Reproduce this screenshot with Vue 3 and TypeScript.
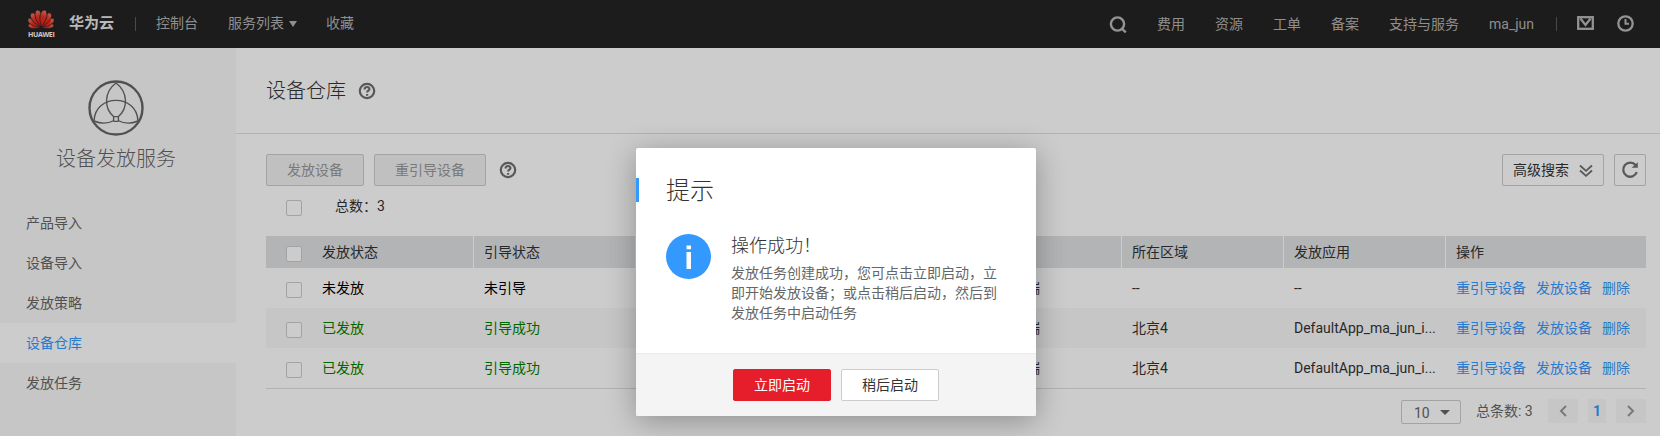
<script setup lang="ts">
interface Row {
  state: string
  boot: string
  region: string
  app: string
  tone: 'plain' | 'ok'
}

interface Petal {
  angle: number
  size: number
}

const leftNav: string[] = ['控制台', '服务列表', '收藏']
const rightNav: string[] = ['费用', '资源', '工单', '备案', '支持与服务', 'ma_jun']
const menu: string[] = ['产品导入', '设备导入', '发放策略', '设备仓库', '发放任务']
const activeMenu = '设备仓库'
const rows: Row[] = [
  { state: '未发放', boot: '未引导', region: '--', app: '--', tone: 'plain' },
  { state: '已发放', boot: '引导成功', region: '北京4', app: 'DefaultApp_ma_jun_i...', tone: 'ok' },
  { state: '已发放', boot: '引导成功', region: '北京4', app: 'DefaultApp_ma_jun_i...', tone: 'ok' },
]
const actions: string[] = ['重引导设备', '发放设备', '删除']
const petals: Petal[] = [
  { angle: -80, size: 0.86 },
  { angle: 80, size: 0.86 },
  { angle: -57, size: 1.04 },
  { angle: 57, size: 1.04 },
  { angle: -34, size: 1.16 },
  { angle: 34, size: 1.16 },
  { angle: -12, size: 1.2 },
  { angle: 12, size: 1.2 },
]
</script>

<template>
  <div class="page">
    <header class="topbar">
      <div class="logo">
        <svg width="26" height="20" viewBox="0 0 26 20">
          <defs>
            <linearGradient id="petal" x1="0" y1="0" x2="0" y2="1">
              <stop offset="0" stop-color="#f4806a" />
              <stop offset="0.4" stop-color="#ea3024" />
              <stop offset="1" stop-color="#dc2018" />
            </linearGradient>
          </defs>
          <path
            v-for="p in petals"
            :key="p.angle"
            d="M0 -0.500C-2.800 -6 -3.800 -11 -1.600 -14Q0 -15.800 1.600 -14C3.800 -11 2.800 -6 0 -0.500Z"
            :transform="`translate(13 18.500) rotate(${p.angle}) scale(${p.size})`"
            fill="url(#petal)"
            stroke="#232323"
            stroke-width="0.6"
          />
        </svg>
        <span class="logo-name">HUAWEI</span>
      </div>
      <span class="brand">华为云</span>
      <i class="bar bar-left"></i>
      <nav class="nav nav-left">
        <a v-for="n in leftNav" :key="n">{{ n }}<i v-if="n === '服务列表'" class="caret"></i></a>
      </nav>
      <nav class="nav nav-right">
        <svg class="search" width="18" height="18" viewBox="0 0 18 18" fill="none" stroke="#b8b8b8" stroke-width="2.400">
          <circle cx="8.500" cy="8" r="6.600" /><path d="M12.800 12.600L16.800 16.300" />
        </svg>
        <a v-for="n in rightNav" :key="n">{{ n }}</a>
      </nav>
      <i class="bar bar-right"></i>
      <svg class="mail" width="17" height="14" viewBox="0 0 17 14" fill="none" stroke="#b8b8b8" stroke-width="2.300">
        <rect x="1.200" y="1.200" width="14.600" height="11.600" /><path d="M3.400 2.500L8.500 9L13.600 2.500" />
      </svg>
      <svg class="clock" width="17" height="17" viewBox="0 0 17 17" fill="none" stroke="#b8b8b8" stroke-width="2.300">
        <circle cx="8.500" cy="8.500" r="7.200" /><path d="M8.500 4V8.700H12" stroke-width="2" />
      </svg>
    </header>

    <div class="body">
      <aside class="side">
        <svg class="side-icon" width="56" height="56" viewBox="0 0 56 56" fill="none" stroke="#666">
          <circle cx="28" cy="28" r="26.500" stroke-width="2.400" />
          <g stroke-width="1.400">
            <path d="M28 3C16 12 15.500 28 26 37M28 3C40 12 40.500 28 30 37" />
            <path d="M6 41C7 13.500 49 13.500 50 41" />
            <path d="M6 41Q16.500 45.500 26 40.500M50 41Q39.500 45.500 30 40.500" />
            <rect x="25.600" y="36.600" width="4.800" height="4.800" rx="1" />
          </g>
        </svg>
        <div class="side-title">设备发放服务</div>
        <ul class="menu">
          <li v-for="m in menu" :key="m" :class="{ active: m === activeMenu }">{{ m }}</li>
        </ul>
      </aside>

      <main class="main">
        <div class="heading">
          <h1>设备仓库</h1>
          <svg class="help" width="18" height="18" viewBox="0 0 18 18" fill="none" stroke="#707070" stroke-width="2.200">
            <circle cx="9" cy="9" r="7.200" /><path d="M6.600 7.400C6.600 4.200 11.500 4.300 11.400 7.200C11.300 8.700 9.100 8.800 9.100 10.600M9.100 11.900V13.800" />
          </svg>
        </div>

        <div class="content">
          <div class="tools">
            <button class="btn disabled">发放设备</button>
            <button class="btn disabled">重引导设备</button>
            <svg class="help" width="18" height="18" viewBox="0 0 18 18" fill="none" stroke="#707070" stroke-width="2.200">
              <circle cx="9" cy="9" r="7.200" /><path d="M6.600 7.400C6.600 4.200 11.500 4.300 11.400 7.200C11.300 8.700 9.100 8.800 9.100 10.600M9.100 11.900V13.800" />
            </svg>
            <button class="btn adv">
              高级搜索
              <svg width="14" height="14" viewBox="0 0 14 14" fill="none" stroke="#707070" stroke-width="1.800">
                <path d="M1 2.500L7 7.800L13 2.500M1 7.500L7 12.800L13 7.500" />
              </svg>
            </button>
            <button class="btn refresh">
              <svg width="18" height="18" viewBox="0 0 18 18" fill="none" stroke="#707070" stroke-width="2.300">
                <path d="M14.700 4.300A7 7 0 1 0 15.800 11.200" /><path d="M10.600 6.700L16.800 1.300V6.700Z" fill="#707070" stroke="none" />
              </svg>
            </button>
          </div>

          <div class="total"><i class="check"></i><span>总数：3</span></div>

          <div class="table">
            <div class="tr th">
              <div class="td first"><i class="check"></i>发放状态</div>
              <div class="td">引导状态</div>
              <div class="td"></div>
              <div class="td"></div>
              <div class="td"></div>
              <div class="td">所在区域</div>
              <div class="td">发放应用</div>
              <div class="td">操作</div>
            </div>
            <div v-for="(r, i) in rows" :key="i" class="tr">
              <div class="td first" :class="r.tone"><i class="check"></i>{{ r.state }}</div>
              <div class="td" :class="r.tone">{{ r.boot }}</div>
              <div class="td"></div>
              <div class="td"></div>
              <div class="td tail">端</div>
              <div class="td">{{ r.region }}</div>
              <div class="td">{{ r.app }}</div>
              <div class="td ops"><a v-for="a in actions" :key="a">{{ a }}</a></div>
            </div>
          </div>

          <div class="pager">
            <div class="size"><span>10</span><i class="down"></i></div>
            <span class="count">总条数: 3</span>
            <span class="pg"><svg width="8" height="12" viewBox="0 0 8 12" fill="none" stroke="#999" stroke-width="2"><path d="M7 1L2 6L7 11" /></svg></span>
            <span class="pg current">1</span>
            <span class="pg"><svg width="8" height="12" viewBox="0 0 8 12" fill="none" stroke="#999" stroke-width="2"><path d="M1 1L6 6L1 11" /></svg></span>
          </div>
        </div>
      </main>
    </div>

    <div class="mask">
      <section class="dialog">
        <h2>提示</h2>
        <div class="message">
          <svg width="45" height="45" viewBox="0 0 45 45">
            <circle cx="22.500" cy="22.500" r="22.500" fill="#39f" />
            <path d="M20.500 11.500H25V15.200H20.500ZM20.500 18H25V35H20.500Z" fill="#fff" />
          </svg>
          <div>
            <h3>操作成功！</h3>
            <p>发放任务创建成功，您可点击立即启动，立即开始发放设备；或点击稍后启动，然后到发放任务中启动任务</p>
          </div>
        </div>
        <footer>
          <button class="btn primary">立即启动</button>
          <button class="btn">稍后启动</button>
        </footer>
      </section>
    </div>
  </div>
</template>

<style>
body {
  margin: 0;
  overflow: hidden;
}
</style>

<style scoped>
.page {
  position: relative;
  width: 1660px;
  height: 436px;
  overflow: hidden;
  background: #fff;
  color: #333;
  font: 14px/20px Roboto, "Noto Sans CJK SC", sans-serif;
}
.page *, .page *::before {
  box-sizing: border-box;
}
h1, h2, h3, p, ul {
  margin: 0;
  padding: 0;
  font-weight: 300;
  list-style: none;
}
p, ul {
  font-weight: 400;
}
svg {
  display: block;
  flex: none;
}
.topbar {
  display: flex;
  align-items: center;
  height: 48px;
  padding: 0 26px 4px 28px;
  background: #232323;
  color: #b2b2b2;
  white-space: nowrap;
}
.logo {
  width: 26px;
  margin-top: 3px;
}
.logo-name {
  display: block;
  margin-top: 2px;
  font: 700 7px/8px "Open Sans", sans-serif;
  letter-spacing: -0.35px;
  color: #fff;
}
.brand {
  margin: 2px 0 0 15px;
  font-size: 15px;
  font-weight: 700;
  color: #e8e8e8;
}
.bar {
  width: 1px;
  height: 14px;
  margin-top: 4px;
  background: #5c5c5c;
}
.bar-left {
  margin-left: 21px;
}
.nav {
  display: flex;
  align-items: center;
  gap: 30px;
  margin-top: 2px;
}
.nav a {
  display: flex;
  align-items: center;
}
.nav-left {
  margin-left: 20px;
}
.caret {
  margin: 2px -1px 0 5px;
  border: solid transparent;
  border-width: 6px 4px 0;
  border-top-color: #b2b2b2;
}
.nav-right {
  margin: 4px 0 0 auto;
}
.search {
  margin: 1px 0 0;
}
.nav-right a:last-child {
  width: 45px;
}
.bar-right {
  margin-left: 22px;
}
.mail {
  margin: 2px 0 0 20px;
}
.clock {
  margin: 2px 0 0 23px;
}
.body {
  display: flex;
  height: 388px;
}
.side {
  flex: none;
  width: 236px;
  padding-top: 32px;
  background: #f8f8f8;
  color: #666;
}
.side-icon {
  margin: 0 0 0 88px;
}
.side-title {
  margin: 8px 4px 0 0;
  font-size: 20px;
  font-weight: 300;
  line-height: 30px;
  text-align: center;
}
.menu {
  margin-top: 29px;
}
.menu li {
  height: 40px;
  padding-left: 26px;
  line-height: 40px;
}
.menu .active {
  background: #fff;
  color: #39f;
}
.main {
  flex: 1;
  min-width: 0;
}
.heading {
  display: flex;
  align-items: center;
  height: 86px;
  padding: 0 30px;
  border-bottom: 1px solid #dfdfdf;
}
.heading h1 {
  margin: 1px 12px 0 0;
  font-size: 20px;
  line-height: 30px;
}
.content {
  padding: 20px 14px 0 30px;
}
.tools {
  display: flex;
  align-items: center;
  gap: 10px;
}
.tools .help {
  margin-left: 3px;
}
.btn {
  height: 32px;
  padding: 0 20px;
  border: 1px solid #ccc;
  border-radius: 2px;
  background: #fff;
  color: #333;
  font: inherit;
  white-space: nowrap;
}
.disabled {
  background: #f0f0f0;
  color: #999;
}
.adv {
  display: flex;
  align-items: center;
  justify-content: space-between;
  width: 102px;
  margin-left: auto;
  padding: 0 10px;
}
.refresh {
  width: 32px;
  padding: 0 6px;
}
.check {
  flex: none;
  width: 16px;
  height: 16px;
  border: 1px solid #ccc;
  border-radius: 2px;
  background: #fff;
}
.total {
  display: flex;
  height: 50px;
  padding: 10px 20px 0;
}
.total .check {
  margin-top: 4px;
}
.total span {
  margin-left: 33px;
}
.table {
  border-bottom: 1px solid #dfdfdf;
}
.tr {
  display: grid;
  grid-template-columns: 208px repeat(6, 162px) 200px;
  height: 40px;
}
.tr:nth-child(odd):not(.th) {
  background: #f8f8f8;
}
.td {
  display: flex;
  align-items: center;
  min-width: 0;
  padding-left: 10px;
  white-space: nowrap;
}
.th {
  height: 32px;
  background: #dfe1e4;
}
.th .td:not(:last-child) {
  border-right: 1px solid #fff;
}
.td.first {
  padding-left: 20px;
}
.first .check {
  margin: 4px 20px 0 0;
}
.plain {
  color: #000;
}
.ok {
  color: #008000;
}
.td.tail {
  padding-left: 66px;
}
.ops {
  gap: 10px;
  color: #39f;
}
.pager {
  display: flex;
  align-items: center;
  justify-content: flex-end;
  gap: 10px;
  padding-top: 9px;
  color: #666;
}
.size {
  display: flex;
  align-items: center;
  justify-content: space-between;
  width: 60px;
  height: 24px;
  margin: 2px 5px 0 0;
  padding: 1px 10px 0 12px;
  border: 1px solid #ccc;
  border-radius: 2px;
}
.down {
  border: solid transparent;
  border-width: 5px 5px 0;
  border-top-color: #666;
}
.count {
  width: 62px;
  white-space: nowrap;
}
.pg {
  display: flex;
  align-items: center;
  justify-content: center;
  width: 30px;
  height: 24px;
  background: #f8f8f8;
}
.current {
  width: 18px;
  color: #39f;
  font-weight: 700;
}
.mask {
  position: absolute;
  inset: 0;
  background: rgba(0, 0, 0, 0.2);
}
.dialog {
  display: flex;
  flex-direction: column;
  width: 400px;
  height: 268px;
  margin: 148px 0 0 636px;
  border-radius: 2px;
  background: #fff;
  box-shadow: 0 5px 30px rgba(0, 0, 0, 0.3);
  overflow: hidden;
}
.dialog h2 {
  height: 24px;
  margin-top: 30px;
  padding-left: 27px;
  border-left: 3px solid #39f;
  font-size: 24px;
  line-height: 26px;
}
.message {
  display: flex;
  gap: 20px;
  padding: 32px 30px 0;
}
.message h3 {
  font-size: 18px;
  line-height: 24px;
}
.message p {
  width: 270px;
  margin-top: 5px;
  color: #666;
}
.dialog footer {
  display: flex;
  justify-content: center;
  gap: 10px;
  height: 63px;
  margin-top: auto;
  padding-top: 15px;
  border-top: 1px solid #eaeaea;
  background: #f4f4f4;
}
.primary {
  border-color: #e61d2b;
  background: #e61d2b;
  color: #fff;
}
</style>
